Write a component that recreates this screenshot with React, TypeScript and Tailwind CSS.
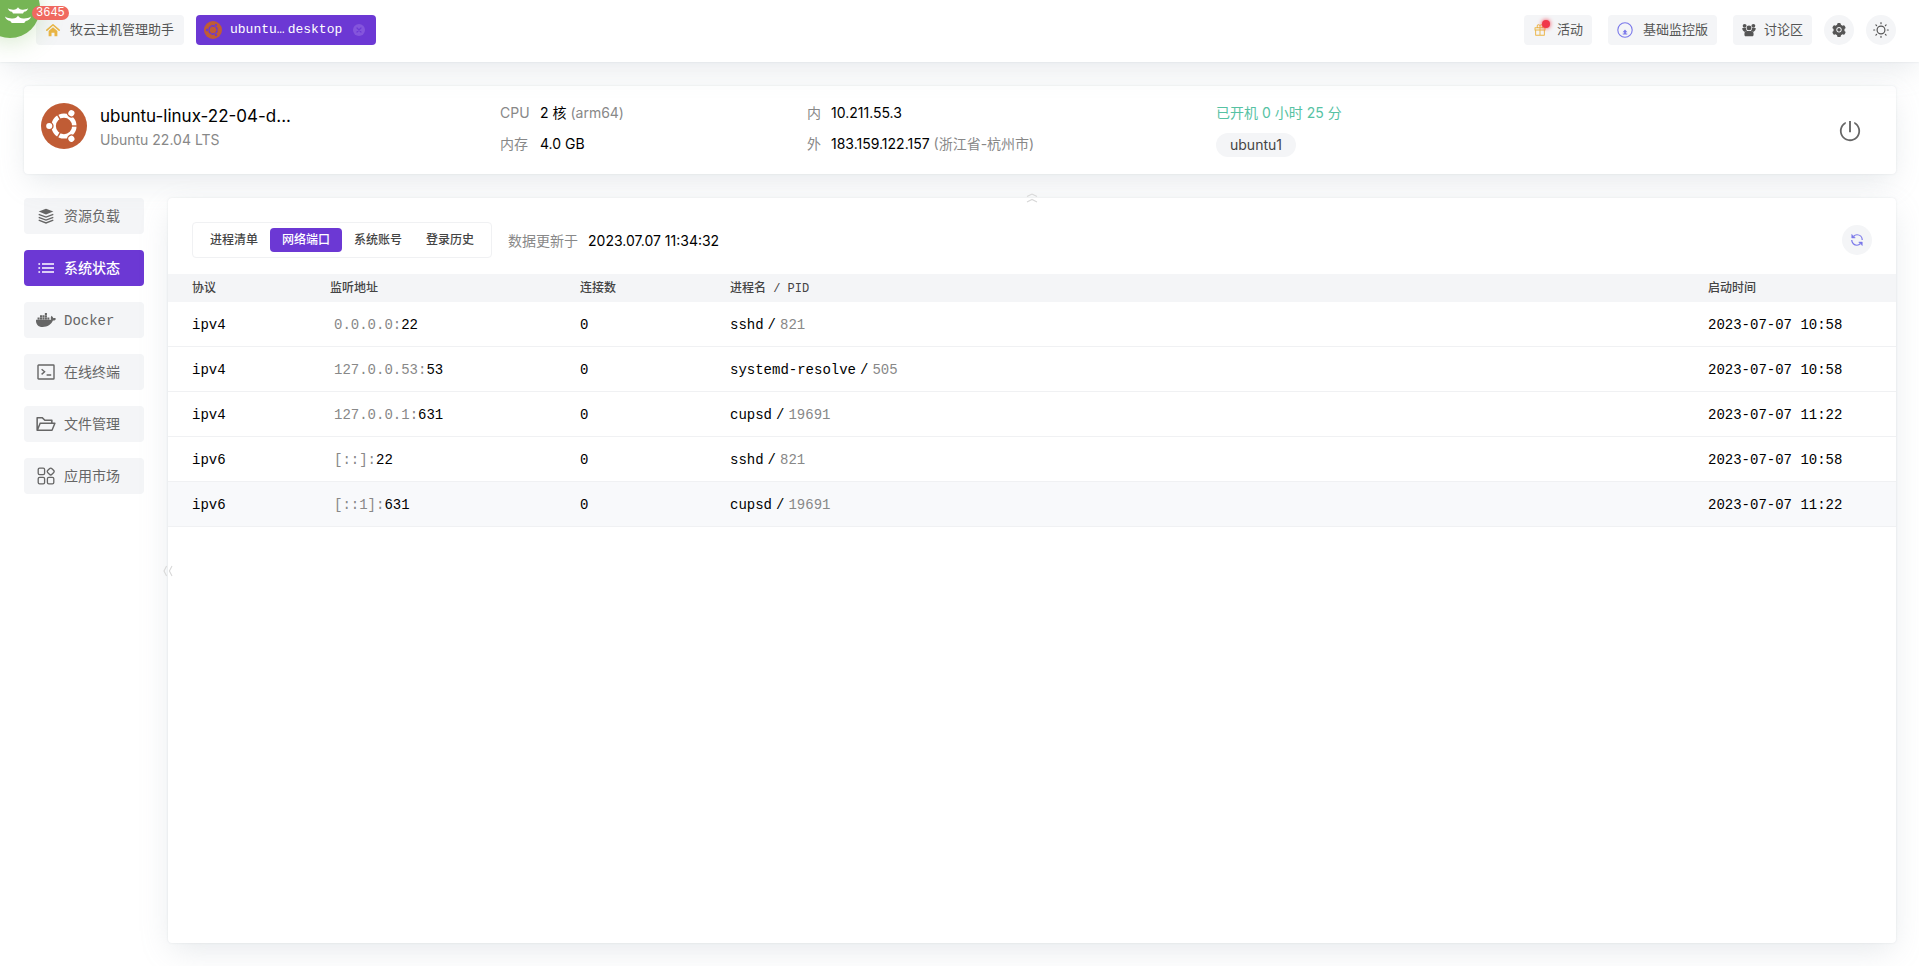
import React from 'react';
import { FaDocker } from 'react-icons/fa';
import {
  AiOutlineFolderOpen,
  AiOutlineGift,
  AiOutlinePoweroff,
  AiFillSetting,
} from 'react-icons/ai';

type IconProps = { className?: string };

function UbuntuIcon({ className, disc, mark }: IconProps & { disc: string; mark: string }) {
  return (
    <svg viewBox="0 0 48 48" className={className} aria-hidden="true">
      <circle cx="24" cy="24" r="24" className={disc} />
      <circle cx="24" cy="24" r="10.8" fill="none" strokeWidth="4.6" className={mark} />
      {[0, 120, 240].map((a) => (
        <g key={a} transform={`rotate(${a} 24 24)`}>
          <rect x="31" y="23.3" width="8" height="1.4" className={disc} />
          <circle cx="8.6" cy="24" r="4.6" className={disc} />
          <circle cx="8.6" cy="24" r="1.6" fill="none" strokeWidth="3.2" className={mark} />
        </g>
      ))}
    </svg>
  );
}

function HomeIcon({ className }: IconProps) {
  return (
    <svg viewBox="0 0 16 16" className={className} aria-hidden="true">
      <path d="M1 8.2 8 2l7 6.2" fill="none" stroke="currentColor" strokeWidth="1.8" strokeLinecap="round" strokeLinejoin="round" />
      <path d="M3 9 8 4.8 13 9v6H9.7v-4H6.3v4H3z" fill="currentColor" />
    </svg>
  );
}

function CloseIcon({ className }: IconProps) {
  return (
    <svg viewBox="0 0 12 12" className={className} aria-hidden="true">
      <circle cx="6" cy="6" r="6" fill="#8455dc" />
      <path d="m4 4 4 4M8 4 4 8" stroke="#6c38d4" strokeWidth="1.2" strokeLinecap="round" />
    </svg>
  );
}

function MonitorIcon({ className }: IconProps) {
  return (
    <svg viewBox="0 0 16 16" className={className} aria-hidden="true">
      <circle cx="8" cy="8" r="7.2" fill="none" stroke="currentColor" strokeWidth="1.1" />
      <path d="M8 7.4 10.4 10.2H8.9v1.2h1.4v1H5.7v-1h1.4v-1.2H5.6z" fill="currentColor" />
    </svg>
  );
}

function PeopleIcon({ className }: IconProps) {
  return (
    <svg viewBox="0 0 16 16" className={className} fill="currentColor" aria-hidden="true">
      <circle cx="3" cy="3.2" r="2.200" />
      <circle cx="13" cy="3.2" r="2.200" />
      <circle cx="8" cy="5.6" r="2.8" />
      <path d="M.3 5.800h4.200c0 1.400.6 2.400 1.400 3.100-1.200.2-2 .6-2.600 1.300C1.400 9.700.3 8.300.3 5.800z" />
      <path d="M15.700 5.800h-4.200c0 1.400-.6 2.400-1.400 3.100 1.200.2 2 .6 2.600 1.300 1.900-.5 3-1.900 3-4.400z" />
      <path d="M2.800 12c0-1.600 1-2.800 2.800-2.800h4.800c1.800 0 2.800 1.200 2.800 2.800v1.800c0 .8-.6 1.400-1.400 1.400H4.200c-.8 0-1.400-.6-1.400-1.400z" />
    </svg>
  );
}

function SunIcon({ className }: IconProps) {
  return (
    <svg viewBox="0 0 16 16" className={className} fill="none" stroke="currentColor" strokeWidth="1.2" strokeLinecap="round" aria-hidden="true">
      <circle cx="8" cy="8" r="3.9" />
      <path d="M8 .7v1M8 14.300v1M.7 8h1M14.300 8h1M2.900 2.900l.7.7M12.400 12.400l.7.7M2.900 13.100l.7-.7M12.400 3.600l.7-.7" />
    </svg>
  );
}

function LayersIcon({ className }: IconProps) {
  return (
    <svg viewBox="0 0 16 16" className={className} aria-hidden="true">
      <path d="M8 .7 15.300 3.600 8 6.500.7 3.600z" fill="currentColor" />
      <path d="M.7 6.300 8 9.100l7.300-2.800M.7 9.300 8 12.100l7.300-2.800M.7 12.200 8 15l7.300-2.800" fill="none" stroke="currentColor" strokeWidth="1.4" />
    </svg>
  );
}

function ListIcon({ className }: IconProps) {
  return (
    <svg viewBox="0 0 16 16" className={className} stroke="currentColor" strokeWidth="1.7" aria-hidden="true">
      <path d="M.4 4h1.700M.4 8h1.700M.4 12h1.700M4 4h12M4 8h12M4 12h12" />
    </svg>
  );
}

function TerminalIcon({ className }: IconProps) {
  return (
    <svg viewBox="0 0 18 16" className={className} fill="none" stroke="currentColor" strokeWidth="1.4" aria-hidden="true">
      <rect x="1" y="1" width="16" height="14" rx=".6" />
      <path d="m4.600 5.200 3 2.600-3 2.600M9.600 11h4.600" />
    </svg>
  );
}

function AppsIcon({ className }: IconProps) {
  return (
    <svg viewBox="0 0 18 18" className={className} fill="none" stroke="currentColor" strokeWidth="1.3" aria-hidden="true">
      <rect x="1.200" y="1.200" width="6.400" height="6.400" rx="1.400" />
      <rect x="1.200" y="10.400" width="6.400" height="6.400" rx="1.400" />
      <rect x="10.400" y="10.400" width="6.400" height="6.400" rx="1.400" />
      <rect x="10.800" y="1.600" width="5.800" height="5.800" rx="1.800" transform="rotate(45 13.700 4.500)" />
    </svg>
  );
}

function RefreshIcon({ className }: IconProps) {
  return (
    <svg viewBox="0 0 16 16" className={className} fill="none" stroke="currentColor" strokeWidth="1.4" aria-hidden="true">
      <path d="M4.200 3.800C5.300 2.500 6.600 2 8 2c3.300 0 6 2.400 6 6M11.800 12.200C10.700 13.500 9.400 14 8 14c-3.300 0-6-2.400-6-6" />
      <path d="M2 1.600v4h4zM14 14.400v-4h-4z" fill="currentColor" strokeWidth=".6" />
    </svg>
  );
}

function TempleIcon({ className }: IconProps) {
  return (
    <svg viewBox="0 0 28 20" className={className} fill="#fff" aria-hidden="true">
      <path d="M14 1.200c.9 1.700 2.300 2.400 4.400 2.500 2.200.1 3.900-.3 5.800-1.400-.5 2-2.200 3.300-4.200 3.500L19 7.400H9L8 5.800C6 5.600 4.300 4.300 3.800 2.300c1.900 1.100 3.600 1.500 5.800 1.400C11.700 3.600 13.100 2.900 14 1.200z" />
      <path d="M14 9.400c.9 1.900 2.700 2.900 5.200 3.100 2.700.2 5.400-.3 7.800-1.900-.6 2.500-2.600 4-5.200 4.400L20.200 17H7.800l-1.600-2C3.600 14.600 1.600 13.100 1 10.600c2.400 1.600 5.100 2.100 7.800 1.900 2.500-.2 4.300-1.200 5.200-3.100z" />
    </svg>
  );
}

function DoubleChevron({ className }: IconProps) {
  return (
    <svg viewBox="0 0 12 12" className={className} fill="none" stroke="currentColor" strokeWidth="1.1" aria-hidden="true">
      <path d="M1 4.600 6 2l5 2.600M1 10 6 7.400l5 2.600" />
    </svg>
  );
}

const cardShadow =
  'shadow-[0_0_2px_rgba(145,158,171,0.24),0_10px_30px_-4px_rgba(145,158,171,0.24)]';

const navItems = [
  { label: '资源负载', icon: <LayersIcon className="size-4" /> },
  { label: '系统状态', icon: <ListIcon className="size-4" />, active: true },
  { label: 'Docker', icon: <FaDocker className="size-5" /> },
  { label: '在线终端', icon: <TerminalIcon className="h-4 w-[18px]" /> },
  { label: '文件管理', icon: <AiOutlineFolderOpen className="size-[22px] shrink-0" /> },
  { label: '应用市场', icon: <AppsIcon className="size-[18px]" /> },
];

const tabs = ['进程清单', '网络端口', '系统账号', '登录历史'];

const rows = [
  { proto: 'ipv4', host: '0.0.0.0', port: '22', name: 'sshd', pid: '821', time: '2023-07-07 10:58' },
  { proto: 'ipv4', host: '127.0.0.53', port: '53', name: 'systemd-resolve', pid: '505', time: '2023-07-07 10:58' },
  { proto: 'ipv4', host: '127.0.0.1', port: '631', name: 'cupsd', pid: '19691', time: '2023-07-07 11:22' },
  { proto: 'ipv6', host: '[::]', port: '22', name: 'sshd', pid: '821', time: '2023-07-07 10:58' },
  { proto: 'ipv6', host: '[::1]', port: '631', name: 'cupsd', pid: '19691', time: '2023-07-07 11:22', hover: true },
];

function Header() {
  const pill = 'flex h-[30px] items-center rounded bg-[#f4f5f7] text-[13px] text-[#555]';
  const round = 'flex size-[30px] items-center justify-center rounded-full bg-[#f4f5f7] text-[#555]';
  return (
    <header className={`relative z-10 flex h-[62px] items-start justify-between bg-white pt-[15px] pr-[23px] pl-9 ${cardShadow}`}>
      <a
        href="#"
        aria-label="首页"
        className="absolute -top-[22px] -left-5 size-[60px] rounded-full bg-[#76b555] shadow-[0_4px_24px_rgba(118,181,85,0.3)]"
      >
        <TempleIcon className="absolute top-7 left-6 h-5 w-7" />
      </a>
      <span className="absolute top-1.5 left-8 z-10 flex h-3.5 items-center rounded-full bg-[#f0695f] px-1 text-[12px] leading-none text-white">
        3645
      </span>
      <nav className="flex gap-3">
        <a href="#" className={`${pill} gap-2.5 px-2.5`}>
          <HomeIcon className="size-3.5 text-[#eab545]" />
          <span className="pt-0.5">牧云主机管理助手</span>
        </a>
        <div className="flex h-[30px] w-[180px] items-center rounded bg-[#6c38d4] px-2 text-[13px] text-white">
          <a href="#" className="flex items-center gap-2">
            <UbuntuIcon className="size-[18px]" disc="fill-[#c05c35] stroke-none" mark="stroke-[#6c38d4]" />
            <span className="flex">
              <span>ubuntu…</span>
              <span className="ml-[3px]">desktop</span>
            </span>
          </a>
          <button type="button" aria-label="关闭" className="mr-[3px] ml-auto">
            <CloseIcon className="size-3" />
          </button>
        </div>
      </nav>
      <div className="flex gap-4">
        <button type="button" className={`${pill} gap-2.5 px-[9px]`}>
          <span className="relative">
            <AiOutlineGift className="size-3.5 text-[#eab545]" />
            <span className="absolute -top-[3px] left-[9px] size-2 rounded-full bg-[#f0364a] shadow-[0_0_4px_#f0364a]" />
          </span>
          <span className="pt-0.5">活动</span>
        </button>
        <button type="button" className={`${pill} gap-2.5 px-[9px]`}>
          <MonitorIcon className="size-4 text-[#7a78ea]" />
          <span className="pt-0.5">基础监控版</span>
        </button>
        <div className="flex gap-3">
          <button type="button" className={`${pill} gap-2 px-[9px]`}>
            <PeopleIcon className="size-3.5" />
            <span className="pt-0.5">讨论区</span>
          </button>
          <button type="button" aria-label="设置" className={round}>
            <AiFillSetting className="size-4" />
          </button>
          <button type="button" aria-label="主题" className={round}>
            <SunIcon className="size-4" />
          </button>
        </div>
      </div>
    </header>
  );
}

function HostCard() {
  return (
    <section
      className={`relative grid h-[88px] grid-cols-[460fr_307fr_409fr_664fr] rounded bg-white px-4 pt-[17px] font-['Inter','Noto_Sans_CJK_SC',sans-serif] text-sm text-black ${cardShadow}`}
    >
      <div className="flex gap-3">
        <UbuntuIcon className="ml-px size-[46px] shrink-0" disc="fill-[#c05c35] stroke-none" mark="stroke-white" />
        <div className="pl-px">
          <h1 className="mt-px text-[17px] leading-6 whitespace-nowrap">ubuntu-linux-22-04-d...</h1>
          <p className="mt-0.5 leading-5 text-[#888]">Ubuntu 22.04 LTS</p>
        </div>
      </div>
      <dl className="grid auto-rows-[20px] grid-cols-[40px_1fr] gap-y-[11px] leading-5">
        <dt className="text-[#888]">CPU</dt>
        <dd>2 核 <span className="text-[#888]">(arm64)</span></dd>
        <dt className="text-[#888]">内存</dt>
        <dd>4.0 GB</dd>
      </dl>
      <dl className="grid auto-rows-[20px] grid-cols-[24px_1fr] gap-y-[11px] leading-5">
        <dt className="text-[#888]">内</dt>
        <dd>10.211.55.3</dd>
        <dt className="text-[#888]">外</dt>
        <dd>183.159.122.157 <span className="text-[#888]">(浙江省-杭州市)</span></dd>
      </dl>
      <div className="flex justify-between">
        <div>
          <p className="leading-5 text-[#56c2a3]">已开机 0 小时 25 分</p>
          <span className="mt-2.5 inline-flex h-6 items-center rounded-full bg-[#f4f5f7] px-3.5 text-[#444]">ubuntu1</span>
        </div>
        <button type="button" aria-label="电源" className="mt-4 mr-[18px] size-6 text-[#666]">
          <AiOutlinePoweroff className="size-6" />
        </button>
      </div>
    </section>
  );
}

function SideNav() {
  return (
    <nav className="flex w-[120px] shrink-0 flex-col gap-4">
      {navItems.map((item) => (
        <a
          key={item.label}
          href="#"
          className={`flex h-9 items-center gap-2 rounded pl-3 text-sm ${
            item.active ? 'bg-[#6c38d4] font-medium text-white' : 'bg-[#f4f5f7] text-[#666]'
          }`}
        >
          <span className="flex w-5 justify-center">{item.icon}</span>
          <span className="pt-0.5">{item.label}</span>
        </a>
      ))}
    </nav>
  );
}

function PortTable() {
  return (
    <table className="w-full table-fixed border-separate border-spacing-0 text-left text-sm text-black">
      <colgroup>
        <col className="w-[162px]" />
        <col className="w-[250px]" />
        <col className="w-[150px]" />
        <col />
        <col className="w-[188px]" />
      </colgroup>
      <thead>
        <tr className="h-7 bg-[#f4f5f7] text-[12px] leading-4 text-[#444] [&>th]:pt-0.5 [&>th]:font-medium">
          <th className="pl-6">协议</th>
          <th>监听地址</th>
          <th>连接数</th>
          <th>进程名 / PID</th>
          <th>启动时间</th>
        </tr>
      </thead>
      <tbody>
        {rows.map((r) => (
          <tr
            key={r.host}
            className={`h-[45px] font-medium [&>td]:border-b [&>td]:border-[#f0f1f3] [&>td]:pt-0.5 ${r.hover ? 'bg-[#f8f9fb]' : ''}`}
          >
            <td className="pl-6">{r.proto}</td>
            <td className="pl-1">
              <span className="text-[#888]">{r.host}:</span>
              {r.port}
            </td>
            <td>0</td>
            <td>
              {r.name}
              <span className="mx-1">/</span>
              <span className="text-[#888]">{r.pid}</span>
            </td>
            <td>{r.time}</td>
          </tr>
        ))}
      </tbody>
    </table>
  );
}

export default function App() {
  return (
    <div className="flex min-h-screen flex-col bg-white font-['Liberation_Mono','Noto_Sans_CJK_SC',monospace]">
      <Header />
      <main className="flex grow flex-col gap-6 pt-6 pr-[23px] pb-[23px] pl-6">
        <HostCard />
        <div className="flex grow gap-6">
          <SideNav />
          <section className={`relative min-w-0 grow rounded bg-white ${cardShadow}`}>
            <button type="button" aria-label="收起概览" className="absolute -top-1.5 left-1/2 -ml-1.5 size-3 text-[#d8d8d8]">
              <DoubleChevron className="size-3" />
            </button>
            <button type="button" aria-label="收起菜单" className="absolute top-1/2 -left-1.5 -mt-1.5 size-3 text-[#d8d8d8]">
              <DoubleChevron className="size-3 -rotate-90" />
            </button>
            <div className="flex items-center gap-4 px-6 pt-6 pb-4">
              <div className="flex h-9 items-center rounded border border-[#f0f1f3] px-[5px]">
                {tabs.map((t) => (
                  <button
                    key={t}
                    type="button"
                    className={`h-6 rounded px-3 pt-0.5 text-[12px] leading-5 font-medium ${
                      t === '网络端口' ? 'bg-[#6c38d4] text-white' : 'text-[#444]'
                    }`}
                  >
                    {t}
                  </button>
                ))}
              </div>
              <p className="flex gap-2.5 pt-0.5 font-['Inter','Noto_Sans_CJK_SC',sans-serif] text-sm leading-5 text-black">
                <span className="text-[#888]">数据更新于</span>
                <time>2023.07.07 11:34:32</time>
              </p>
              <button
                type="button"
                aria-label="刷新"
                className="ml-auto flex size-[30px] items-center justify-center rounded-full bg-[#f4f5f7] text-[#7a78ea]"
              >
                <RefreshIcon className="size-3.5" />
              </button>
            </div>
            <PortTable />
          </section>
        </div>
      </main>
    </div>
  );
}
